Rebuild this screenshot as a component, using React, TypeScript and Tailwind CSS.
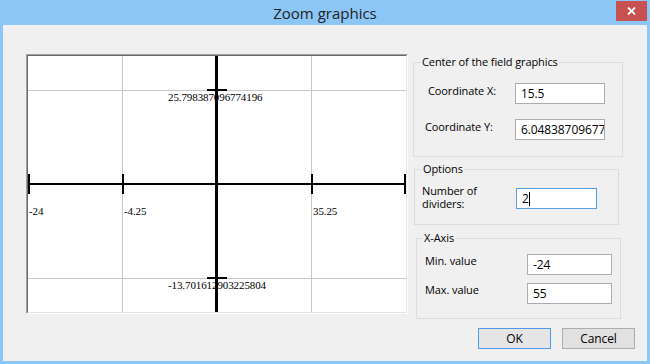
import React from 'react';

const ui = { fontFamily: '"Open Sans", "Noto Sans", sans-serif' };

const Plot = () => {
    // canvas drawn by the app: grid, axes, ticks and value labels
    const serif = { fontFamily: '"Liberation Serif", serif', fontSize: 11 };
    return (
        <div className="border border-t-[#a0a0a0] border-l-[#a0a0a0] border-r-white border-b-white">
            <div className="border border-t-[#696969] border-l-[#696969] border-r-[#e3e3e3] border-b-[#e3e3e3] bg-white">
                <svg width="378" height="256" className="block">
                    <rect x="94" y="0" width="1" height="256" fill="#c8c8c8" />
                    <rect x="283" y="0" width="1" height="256" fill="#c8c8c8" />
                    <rect x="0" y="34" width="378" height="1" fill="#c8c8c8" />
                    <rect x="0" y="222" width="378" height="1" fill="#c8c8c8" />

                    <text x="140" y="45" style={serif} fill="#000">25.798387096774196</text>
                    <text x="140" y="233" style={serif} fill="#000">-13.701612903225804</text>
                    <text x="1" y="159" style={serif} fill="#000">-24</text>
                    <text x="96" y="159" style={serif} fill="#000">-4.25</text>
                    <text x="285" y="159" style={serif} fill="#000">35.25</text>

                    <rect x="0" y="127" width="378" height="2" fill="#000" />
                    <rect x="187" y="0" width="3" height="256" fill="#000" />
                    <rect x="0" y="118" width="2" height="20" fill="#000" />
                    <rect x="94" y="118" width="2" height="20" fill="#000" />
                    <rect x="283" y="118" width="2" height="20" fill="#000" />
                    <rect x="376" y="118" width="2" height="20" fill="#000" />
                    <rect x="179" y="33" width="20" height="2" fill="#000" />
                    <rect x="179" y="221" width="20" height="2" fill="#000" />
                </svg>
            </div>
        </div>
    );
};

const Field = ({ value, width, focused = false }: { value: string; width: string; focused?: boolean }) => (
    <div
        className={`${width} h-[21px] shrink-0 bg-white border ${focused ? 'border-[#569de5]' : 'border-[#abadb3]'} flex items-center pl-[5px] overflow-hidden whitespace-nowrap leading-[16px] text-[12px]`}
    >
        {value}
        {focused && <span className="inline-block w-px h-[14px] bg-black" />}
    </div>
);

export default function App() {
    return (
        <div className="w-[650px] h-[364px] bg-[#8cc6f7] flex flex-col text-[11px] tracking-[-0.1px] text-black" style={ui}>
            <div className="h-[25px] shrink-0 grid grid-cols-[1fr_auto_1fr]">
                <div />
                <div className="text-[15px] tracking-normal leading-[25px] text-[#222] pt-px">Zoom graphics</div>
                <div className="flex justify-end pr-[3px] pt-px">
                    <div className="w-[31px] h-[20px] bg-[#c75050] flex items-center justify-center">
                        <svg width="9" height="8" viewBox="0 0 9 8">
                            <path d="M1 0.5 L8 7.5 M8 0.5 L1 7.5" stroke="#fff" strokeWidth="1.8" />
                        </svg>
                    </div>
                </div>
            </div>

            <div className="mx-[3px] mb-[3px] flex-1 bg-[#f0f0f0] flex items-start">
                <div className="ml-[23px] mt-[29px]">
                    <Plot />
                </div>

                <div className="ml-[5px] mt-[37px] w-[230px] flex flex-col">
                    <div className="w-[210px] h-[95px] border border-[#dcdcdc]">
                        <div className="-mt-[9px] ml-[7px] w-fit px-px bg-[#f0f0f0] leading-[16px]">Center of the field graphics</div>
                        <div className="mt-[13px] flex items-start">
                            <div className="w-[101px] pl-[14px] leading-[16px]">Coordinate X:</div>
                            <Field value="15.5" width="w-[90px]" />
                        </div>
                        <div className="mt-[15px] flex items-start">
                            <div className="w-[101px] pl-[11px] leading-[16px]">Coordinate Y:</div>
                            <Field value="6.048387096774196" width="w-[90px]" />
                        </div>
                    </div>

                    <div className="mt-[12px] ml-px w-[205px] h-[56px] border border-[#dcdcdc]">
                        <div className="-mt-[9px] ml-[7px] w-fit px-px bg-[#f0f0f0] leading-[16px]">Options</div>
                        <div className="mt-[7px] flex items-start">
                            <div className="w-[101px] pl-[7px] leading-[13px]">
                                Number of
                                <br />
                                dividers:
                            </div>
                            <div className="mt-[4px]">
                                <Field value="2" width="w-[81px]" focused />
                            </div>
                        </div>
                    </div>

                    <div className="mt-[13px] ml-[3px] w-[205px] h-[81px] border border-[#dcdcdc]">
                        <div className="-mt-[9px] ml-[6px] w-fit px-px bg-[#f0f0f0] leading-[16px]">X-Axis</div>
                        <div className="mt-[7px] flex items-start">
                            <div className="w-[110px] pl-[8px] leading-[16px]">Min. value</div>
                            <div className="mt-px">
                                <Field value="-24" width="w-[85px]" />
                            </div>
                        </div>
                        <div className="mt-[7px] flex items-start">
                            <div className="w-[110px] pl-[8px] leading-[16px]">Max. value</div>
                            <div className="mt-px">
                                <Field value="55" width="w-[85px]" />
                            </div>
                        </div>
                    </div>

                    <div className="mt-[9px] ml-[65px] flex gap-[11px] text-[12px]">
                        <button className="w-[73px] h-[21px] bg-[#e5e5e5] border border-[#4d9be6] leading-[16px]">OK</button>
                        <button className="w-[73px] h-[21px] bg-[#e1e1e1] border border-[#adadad] leading-[16px]">Cancel</button>
                    </div>
                </div>
            </div>
        </div>
    );
}
